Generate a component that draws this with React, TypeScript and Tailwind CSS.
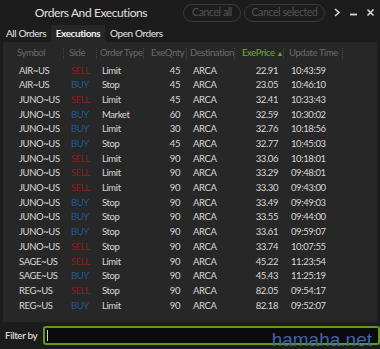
import clsx from 'clsx'

// ─── Data ─────────────────────────────────────────────────────────────────────

type Row = {
  symbol: string
  side: 'BUY' | 'SELL'
  type: string
  qty: number
  dest: string
  price: string
  time: string
}

const rows: Row[] = [
  { symbol: 'AIR~US', side: 'SELL', type: 'Limit', qty: 45, dest: 'ARCA', price: '22.91', time: '10:43:59' },
  { symbol: 'AIR~US', side: 'BUY', type: 'Stop', qty: 45, dest: 'ARCA', price: '23.05', time: '10:46:10' },
  { symbol: 'JUNO~US', side: 'SELL', type: 'Limit', qty: 45, dest: 'ARCA', price: '32.41', time: '10:33:43' },
  { symbol: 'JUNO~US', side: 'BUY', type: 'Market', qty: 60, dest: 'ARCA', price: '32.59', time: '10:30:02' },
  { symbol: 'JUNO~US', side: 'BUY', type: 'Limit', qty: 30, dest: 'ARCA', price: '32.76', time: '10:18:56' },
  { symbol: 'JUNO~US', side: 'BUY', type: 'Stop', qty: 45, dest: 'ARCA', price: '32.77', time: '10:45:03' },
  { symbol: 'JUNO~US', side: 'SELL', type: 'Limit', qty: 90, dest: 'ARCA', price: '33.06', time: '10:18:01' },
  { symbol: 'JUNO~US', side: 'SELL', type: 'Limit', qty: 90, dest: 'ARCA', price: '33.29', time: '09:48:01' },
  { symbol: 'JUNO~US', side: 'SELL', type: 'Limit', qty: 90, dest: 'ARCA', price: '33.30', time: '09:43:00' },
  { symbol: 'JUNO~US', side: 'BUY', type: 'Stop', qty: 90, dest: 'ARCA', price: '33.49', time: '09:49:03' },
  { symbol: 'JUNO~US', side: 'BUY', type: 'Stop', qty: 90, dest: 'ARCA', price: '33.55', time: '09:44:00' },
  { symbol: 'JUNO~US', side: 'BUY', type: 'Stop', qty: 90, dest: 'ARCA', price: '33.61', time: '09:59:07' },
  { symbol: 'JUNO~US', side: 'SELL', type: 'Stop', qty: 90, dest: 'ARCA', price: '33.74', time: '10:07:55' },
  { symbol: 'SAGE~US', side: 'SELL', type: 'Limit', qty: 90, dest: 'ARCA', price: '45.22', time: '11:23:54' },
  { symbol: 'SAGE~US', side: 'BUY', type: 'Stop', qty: 90, dest: 'ARCA', price: '45.43', time: '11:25:19' },
  { symbol: 'REG~US', side: 'SELL', type: 'Stop', qty: 90, dest: 'ARCA', price: '82.05', time: '09:54:17' },
  { symbol: 'REG~US', side: 'BUY', type: 'Limit', qty: 90, dest: 'ARCA', price: '82.18', time: '09:52:07' },
]

// ─── Header cell ──────────────────────────────────────────────────────────────

function Th({ children, className }: { children: React.ReactNode; className?: string }) {
  return (
    <div className={clsx('flex items-center justify-between whitespace-nowrap', className)}>
      <span>{children}</span>
      <span className="mr-[1px] h-[11px] w-px border-l border-dotted border-[#474747]" />
    </div>
  )
}

const cols = 'grid-cols-[49px_33px_46px_44px_48px_49px_59px]'

// ─── App ──────────────────────────────────────────────────────────────────────

export default function App() {
  return (
    <div
      className="relative flex h-[349px] w-[380px] flex-col overflow-hidden bg-[#1c1c1c] tracking-[-0.4px] text-[#d8d8d8]"
      style={{ fontFamily: 'Lato, "Noto Sans", sans-serif' }}
    >
      {/* title bar */}
      <div className="flex h-[25px] items-center">
        <div className="w-[183px] pr-[1px] text-center text-[12px] tracking-[-0.4px] text-[#e0e0e0]">
          Orders And Executions
        </div>
        <button className="h-[18px] w-[58px] rounded-full border border-[#3a3a3a] text-[10.5px] leading-none text-[#555555]">
          Cancel all
        </button>
        <button className="ml-[3px] h-[18px] w-[81px] rounded-full border border-[#3a3a3a] text-[10.5px] leading-none text-[#555555]">
          Cancel selected
        </button>
        <div className="flex flex-1 items-center justify-around pl-[4px] pr-[1px] text-[#d8d8d8]">
          <svg width="8" height="9" viewBox="0 0 8 9" fill="none" stroke="currentColor" strokeWidth="1.6">
            <path d="M2 1l4 3.5L2 8" />
          </svg>
          <svg width="9" height="9" viewBox="0 0 9 9" stroke="currentColor" strokeWidth="1.8">
            <path d="M1 6.5h7" />
          </svg>
          <svg width="9" height="9" viewBox="0 0 9 9" stroke="currentColor" strokeWidth="1.6">
            <path d="M1.5 1.5l6 6M7.5 1.5l-6 6" />
          </svg>
        </div>
      </div>

      {/* tabs */}
      <div className="flex h-[17px] items-stretch whitespace-nowrap text-[10px]">
        <div className="flex w-[51px] items-center pl-[6px] text-[#e4e4e4]">All Orders</div>
        <div className="flex w-[54px] items-center justify-center bg-[#272727] font-bold text-[#f2f2f2]">Executions</div>
        <div className="flex items-center pl-[5px] text-[#e4e4e4]">Open Orders</div>
      </div>

      {/* table */}
      <div className="mx-[3px] h-[280px] bg-[#272727] text-[9.5px]">
        <div className={clsx('grid h-[21px] items-center pl-[13px] pt-[1px] text-[#6a6a6a]', cols)}>
          <Th className="pl-[1px]">Symbol</Th>
          <Th className="pl-[4px]">Side</Th>
          <Th className="pl-[2px]">Order Type</Th>
          <Th className="pl-[7px]">ExeQnty</Th>
          <Th className="pl-[2px]">Destination</Th>
          <Th className="pl-[6px] text-[#6fae2a]">
            <span>
              ExePrice <span className="text-[7px]">▲</span>
            </span>
          </Th>
          <Th className="pl-[4px]">Update Time</Th>
        </div>
        <div>
          {rows.map((r, i) => (
            <div key={i} className={clsx('grid h-[14.7px] items-center pl-[13px] leading-none', cols)}>
              <span className="pl-[3px]">{r.symbol}</span>
              <span className={clsx('pl-[6px]', r.side === 'SELL' ? 'text-[#8c1b20]' : 'text-[#1e5c96]')}>
                {r.side}
              </span>
              <span className="pl-[4px]">{r.type}</span>
              <span className="pr-[8px] text-right">{r.qty}</span>
              <span className="pl-[5px]">{r.dest}</span>
              <span className="pr-[7px] text-right">{r.price}</span>
              <span className="pl-[6px]">{r.time}</span>
            </div>
          ))}
        </div>
      </div>

      {/* filter */}
      <div className="mt-auto flex h-[26px] items-center pb-[1px]">
        <span className="pl-[5px] pr-[6px] text-[10px] text-[#ececec]">Filter by</span>
        <div className="flex h-[19px] flex-1 items-center rounded-[3px] border-2 border-[#5e9c1f] bg-[#0b0b0b] pl-[2px]">
          <span className="h-[11px] w-px bg-[#d0d0d0]" />
        </div>
      </div>

      <span
        className="pointer-events-none absolute right-[8px] bottom-[0px] text-[19px] leading-none tracking-normal text-[#3f63b0]"
        style={{ fontFamily: 'Arial, "Liberation Sans", sans-serif' }}
      >
        hamaha.net
      </span>
    </div>
  )
}
